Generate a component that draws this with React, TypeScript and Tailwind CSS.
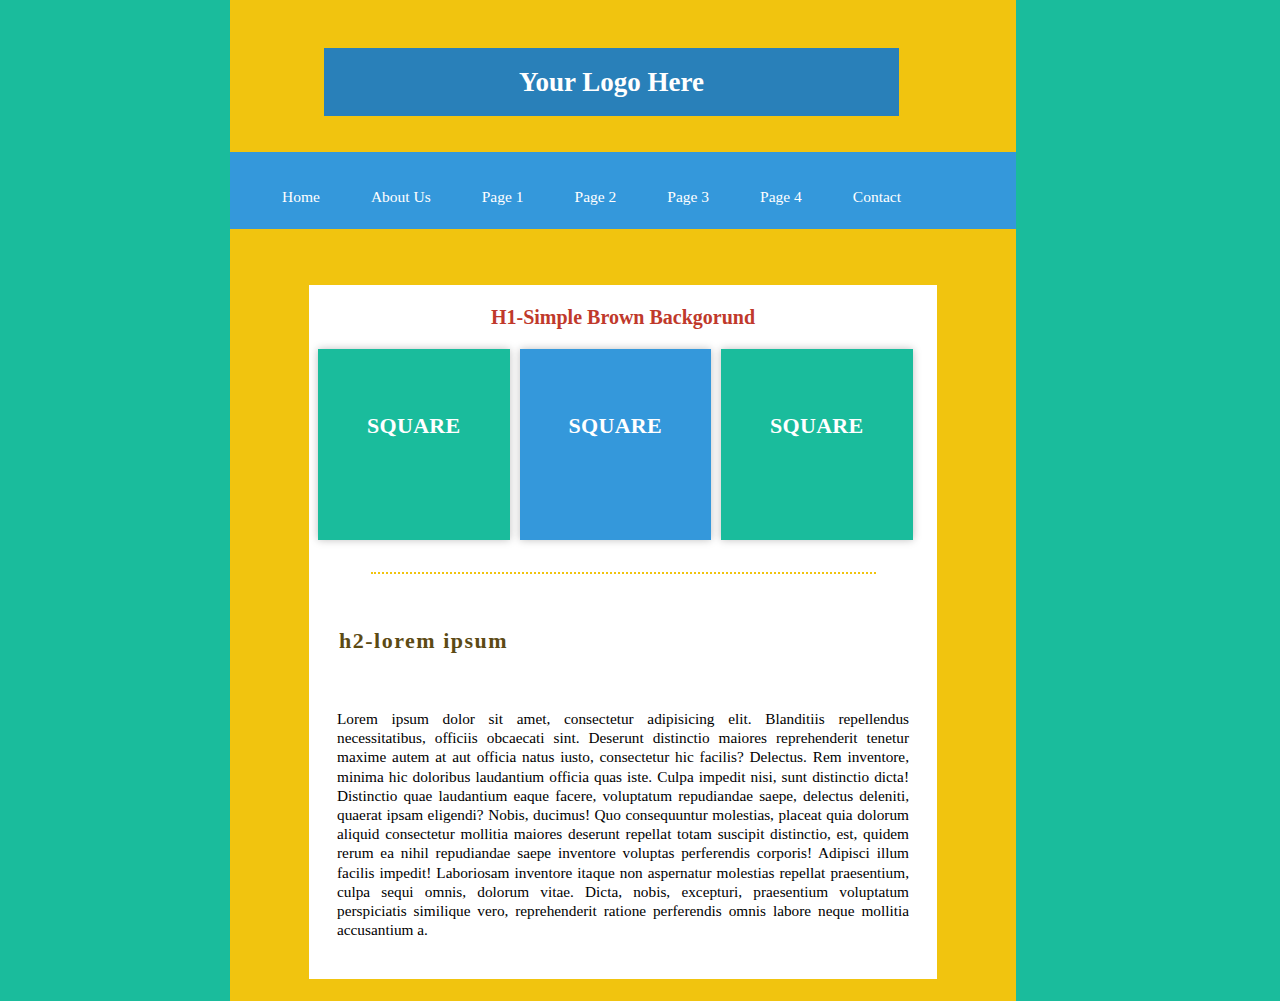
const NAV = ['Home', 'About Us', 'Page 1', 'Page 2', 'Page 3', 'Page 4', 'Contact']

const SQUARES = ['bg-[#1abc9c]', 'bg-[#3498db]', 'bg-[#1abc9c]']

// line breaks as they fall in the original layout
const LOREM_LINES = [
  'Lorem ipsum dolor sit amet, consectetur adipisicing elit. Blanditiis repellendus',
  'necessitatibus, officiis obcaecati sint. Deserunt distinctio maiores reprehenderit tenetur',
  'maxime autem at aut officia natus iusto, consectetur hic facilis? Delectus. Rem inventore,',
  'minima hic doloribus laudantium officia quas iste. Culpa impedit nisi, sunt distinctio dicta!',
  'Distinctio quae laudantium eaque facere, voluptatum repudiandae saepe, delectus deleniti,',
  'quaerat ipsam eligendi? Nobis, ducimus! Quo consequuntur molestias, placeat quia dolorum',
  'aliquid consectetur mollitia maiores deserunt repellat totam suscipit distinctio, est, quidem',
  'rerum ea nihil repudiandae saepe inventore voluptas perferendis corporis! Adipisci illum',
  'facilis impedit! Laboriosam inventore itaque non aspernatur molestias repellat praesentium,',
  'culpa sequi omnis, dolorum vitae. Dicta, nobis, excepturi, praesentium voluptatum',
  'perspiciatis similique vero, reprehenderit ratione perferendis omnis labore neque mollitia',
  'accusantium a.',
]

export default function App() {
  return (
    <div className="min-h-[1001px] bg-[#1abc9c] font-['Liberation_Serif',serif]">
      <div className="ml-[230px] w-[786px] min-h-[1001px] bg-[#f1c40f] pt-[48px] pb-[21px]">
        {/* Logo */}
        <div className="ml-[94px] w-[575px] h-[68px] bg-[#2980b9] flex items-center justify-center">
          <span className="text-white text-[27px] font-bold">Your Logo Here</span>
        </div>

        {/* Nav */}
        <nav className="mt-[36px] h-[77px] bg-[#3498db] flex items-center pl-[52px] gap-[51px] pt-[12px]">
          {NAV.map((n) => (
            <span key={n} className="text-white text-[15.5px]">
              {n}
            </span>
          ))}
        </nav>

        {/* Content box */}
        <div className="mt-[56px] mx-auto w-[628px] bg-white pt-[19px] pb-[40px]">
          <h1 className="text-center text-[#c0392b] text-[20px] font-bold leading-[26px]">
            H1-Simple Brown Backgorund
          </h1>

          <div className="mt-[19px] pl-[9px] flex gap-[10px]">
            {SQUARES.map((c, i) => (
              <div
                key={i}
                className={`${c} w-[191.5px] h-[191px] shadow-[0_0_8px_rgba(0,0,0,0.25)] flex justify-center pt-[64px]`}
              >
                <span className="text-white text-[22px] font-bold tracking-[0.3px] leading-[26px]">SQUARE</span>
              </div>
            ))}
          </div>

          <div className="mt-[32px] mx-auto w-[505px] border-t-2 border-dotted border-[#f1c40f]" />

          <h2 className="mt-[53px] ml-[30px] text-[#5c4a14] text-[22px] font-bold tracking-[1.5px] leading-[28px]">
            h2-lorem ipsum
          </h2>

          <div className="mt-[54px] mx-[28px] text-[15.3px] leading-[19.2px] text-black">
            {LOREM_LINES.map((l, i) => (
              <div
                key={i}
                className={
                  i < LOREM_LINES.length - 1
                    ? 'whitespace-nowrap text-justify [text-align-last:justify]'
                    : 'text-left'
                }
              >
                {l}
              </div>
            ))}
          </div>
        </div>
      </div>
    </div>
  )
}
